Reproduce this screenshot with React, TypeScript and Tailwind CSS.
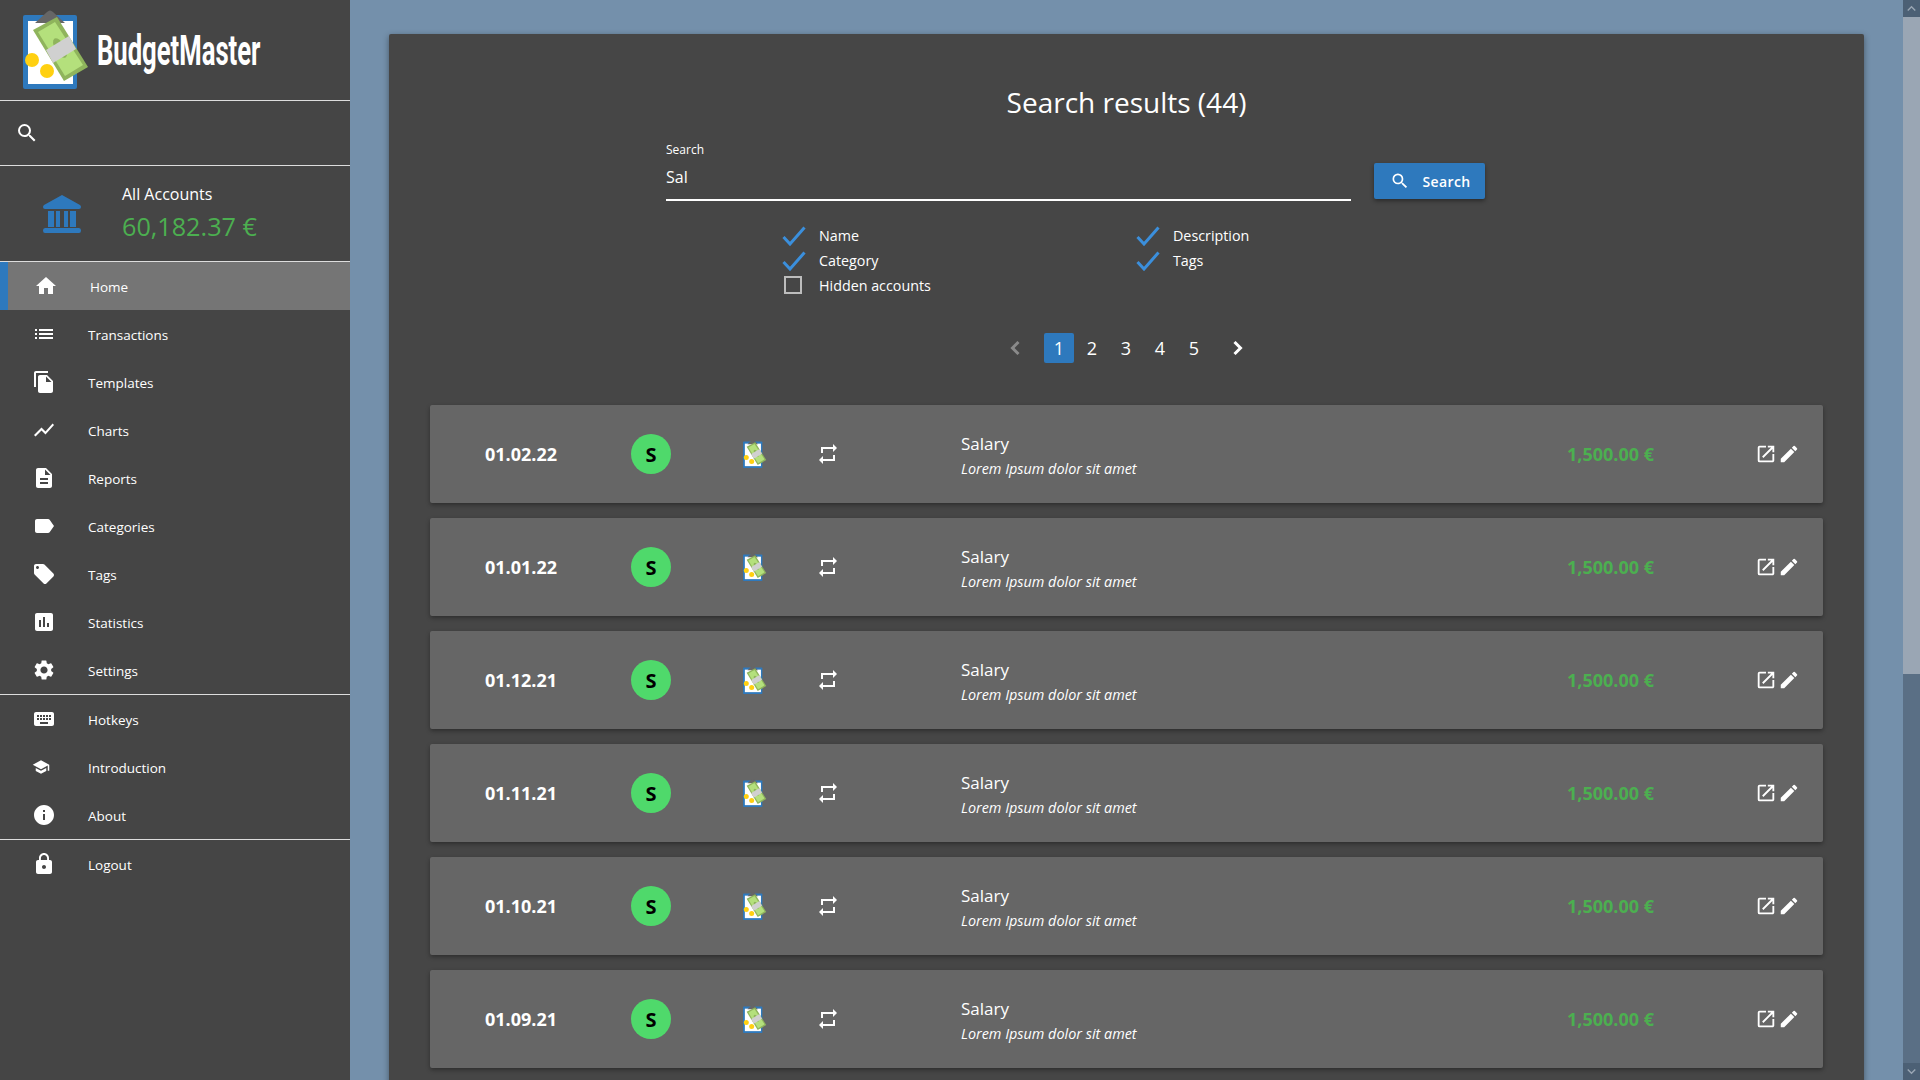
import {
  MdAssessment,
  MdDescription,
  MdEdit,
  MdFileCopy,
  MdHome,
  MdInfo,
  MdKeyboard,
  MdKeyboardArrowDown,
  MdKeyboardArrowUp,
  MdLabel,
  MdList,
  MdLocalOffer,
  MdLock,
  MdOpenInNew,
  MdRepeat,
  MdSchool,
  MdSearch,
  MdSettings,
  MdShowChart,
} from "react-icons/md";

const menuTop = [
  { label: "Transactions", icon: MdList },
  { label: "Templates", icon: MdFileCopy },
  { label: "Charts", icon: MdShowChart },
  { label: "Reports", icon: MdDescription },
  { label: "Categories", icon: MdLabel },
  { label: "Tags", icon: MdLocalOffer },
  { label: "Statistics", icon: MdAssessment },
  { label: "Settings", icon: MdSettings },
];

const dates = ["01.02.22", "01.01.22", "01.12.21", "01.11.21", "01.10.21", "01.09.21"];

function Logo({ width, height }: { width: number; height: number }) {
  return (
    <svg width={width} height={height} viewBox="20 8 70 84" className="shrink-0">
      <rect x="23" y="15" width="54" height="74" rx="2" fill="#2e79bd" />
      <rect x="28" y="21" width="45" height="63" fill="#ffffff" />
      <path d="M35 23 L47 12 Q50 9 53 12 L65 23 Z" fill="#666666" />
      <circle cx="32" cy="60" r="7" fill="#ffd011" />
      <circle cx="47" cy="71" r="7" fill="#ffd011" />
      <path d="M33 30 L57 17 L88 67 L64 81 Z" fill="#8fb45c" />
      <path d="M38 32 L55 22 L83 65 L65 76 Z" fill="#b4e07c" />
      <ellipse cx="60" cy="48" rx="5" ry="11" transform="rotate(-30 60 48)" fill="#8fb45c" />
      <path d="M46 50 L69 36 L76 49 L53 63 Z" fill="#d0d0d0" />
    </svg>
  );
}

function BankIcon() {
  return (
    <svg width="38" height="38" viewBox="0 0 38 38" className="shrink-0" fill="#2e79bd">
      <path d="M19 0 L37 10 Q38 11 38 12 Q38 14 36 14 L2 14 Q0 14 0 12 Q0 11 1 10 Z" />
      <path d="M5 16 H11 V32 H5 Z M13 16 H17 V32 H13 Z M21 16 H25 V32 H21 Z M27 16 H33 V32 H27 Z" />
      <path d="M2 33 H36 Q38 33 38 35.5 Q38 38 36 38 H2 Q0 38 0 35.5 Q0 33 2 33 Z" />
    </svg>
  );
}

function Chevron({ d, color }: { d: string; color: string }) {
  return (
    <svg width="10" height="14" viewBox="0 0 10 14" className="shrink-0">
      <path d={d} fill="none" stroke={color} strokeWidth="3" />
    </svg>
  );
}

function MenuItem({ label, icon: Icon, small }: { label: string; icon: typeof MdHome; small?: boolean }) {
  return (
    <div className="flex h-[48px] items-center pl-[32px] text-[13.5px] font-medium text-white">
      <div className="flex h-[24px] w-[24px] shrink-0 items-center justify-center">
        {small ? <Icon size={20} className="mr-[6px]" /> : <Icon size={24} />}
      </div>
      <span className="mt-[2px] ml-[32px]">{label}</span>
    </div>
  );
}

function Check({ label }: { label: string }) {
  return (
    <div className="flex h-[25px] items-center text-[14.3px] text-white">
      <svg width="24" height="20" viewBox="0 0 24 20" className="shrink-0">
        <path d="M1.5 11 L8 18 L22.5 1.5" fill="none" stroke="#3b8fdc" strokeWidth="3" />
      </svg>
      <span className="ml-[13px]">{label}</span>
    </div>
  );
}

function Row({ date }: { date: string }) {
  return (
    <div className="grid h-[98px] grid-cols-[201px_111px_74px_145px_693px_1fr] items-center rounded-[2px] bg-[#666666] text-white shadow-[0_2px_4px_rgba(0,0,0,0.35)]">
      <div className="pl-[55px] text-[18px] font-bold">{date}</div>
      <div className="flex h-[40px] w-[40px] items-center justify-center rounded-full bg-[#4fd96b] pt-[1px] text-[20px] font-bold text-black">
        S
      </div>
      <Logo width={25} height={30} />
      <MdRepeat size={24} />
      <div className="flex items-center justify-between">
        <div className="pt-[2px]">
          <div className="text-[17px] leading-[24px]">Salary</div>
          <div className="mt-[3px] text-[14.4px] italic leading-[20px]">Lorem Ipsum dolor sit amet</div>
        </div>
        <div className="text-[18px] font-bold text-[#4caf50]">1,500.00 €</div>
      </div>
      <div className="flex items-center pl-[101px]">
        <MdOpenInNew size={22} />
        <MdEdit size={22} className="ml-[1px]" />
      </div>
    </div>
  );
}

export default function App() {
  return (
    <div className="flex h-screen overflow-hidden bg-[#7490ab] font-['Open_Sans',sans-serif]">
      <aside className="h-full w-[350px] shrink-0 bg-[#454545]">
        <div className="flex h-[101px] items-center border-b border-[#dddddd] pl-[20px]">
          <Logo width={70} height={84} />
          <span className="ml-[7px] origin-left scale-x-[0.61] font-['Roboto',sans-serif] text-[42px] font-bold whitespace-nowrap text-white">
            BudgetMaster
          </span>
        </div>
        <div className="flex h-[65px] items-center border-b border-[#dddddd] pl-[15px] text-white">
          <MdSearch size={24} />
        </div>
        <div className="flex h-[96px] items-center border-b border-[#dddddd] pl-[43px]">
          <BankIcon />
          <div className="ml-[41px] text-white">
            <div className="text-[16px] leading-[22px]">All Accounts</div>
            <div className="mt-[3px] text-[25.2px] leading-[36px] text-[#4caf50]">60,182.37 €</div>
          </div>
        </div>
        <div className="flex h-[48px] items-center border-l-[8px] border-[#2e79bd] bg-[#757575] pl-[26px] text-[13.5px] font-medium text-white">
          <MdHome size={24} className="shrink-0" />
          <span className="mt-[2px] ml-[32px]">Home</span>
        </div>
        {menuTop.map((item) => (
          <MenuItem key={item.label} {...item} />
        ))}
        <div className="border-t border-[#dddddd]">
          <MenuItem label="Hotkeys" icon={MdKeyboard} />
          <MenuItem label="Introduction" icon={MdSchool} small />
          <MenuItem label="About" icon={MdInfo} />
        </div>
        <div className="border-t border-[#dddddd]">
          <MenuItem label="Logout" icon={MdLock} />
        </div>
      </aside>

      <main className="h-full min-w-0 flex-1 pt-[34px] pr-[39px] pl-[39px]">
        <div className="rounded-[2px] bg-[#464646] pr-[41px] pb-[40px] pl-[41px] text-white shadow-[0_2px_6px_rgba(0,0,0,0.4)]">
          <h1 className="pt-[48px] text-center text-[28px] leading-[40px] font-normal">Search results (44)</h1>

          <div className="mt-[20px] ml-[236px] flex items-start">
            <div className="w-[685px]">
              <div className="text-[12px] leading-[16px]">Search</div>
              <div className="mt-[7px] text-[16px] leading-[24px]">Sal</div>
              <div className="mt-[10px] border-b-2 border-white" />
            </div>
            <button
              type="button"
              className="mt-[21px] ml-[23px] flex h-[36px] w-[111px] items-center justify-center rounded-[2px] bg-[#2e79bd] pl-[2px] text-[14px] font-semibold tracking-[0.4px] text-white shadow-[0_2px_4px_rgba(0,0,0,0.4)]"
            >
              <MdSearch size={20} />
              <span className="ml-[12px]">Search</span>
            </button>
          </div>

          <div className="mt-[22px] ml-[352px] grid w-[720px] grid-cols-[354px_1fr]">
            <Check label="Name" />
            <Check label="Description" />
            <Check label="Category" />
            <Check label="Tags" />
            <div className="flex h-[25px] items-center text-[14.3px]">
              <div className="mb-[2px] ml-[2px] h-[18px] w-[18px] border-2 border-[#bdbdbd]" />
              <span className="ml-[17px]">Hidden accounts</span>
            </div>
          </div>

          <div className="mt-[35px] ml-[580px] flex h-[30px] items-center text-[18px]">
            <Chevron d="M8.5 1 L2.5 7 L8.5 13" color="#8a8a8a" />
            <span className="ml-[24px] flex h-[30px] w-[30px] items-center justify-center rounded-[2px] bg-[#2e79bd]">1</span>
            <span className="ml-[1px] w-[34px] text-center">2</span>
            <span className="w-[34px] text-center">3</span>
            <span className="w-[34px] text-center">4</span>
            <span className="w-[34px] text-center">5</span>
            <div className="ml-[22px]">
              <Chevron d="M1.5 1 L7.5 7 L1.5 13" color="#ffffff" />
            </div>
          </div>

          <div className="mt-[42px] flex flex-col gap-[15px]">
            {dates.map((d) => (
              <Row key={d} date={d} />
            ))}
          </div>
        </div>
      </main>

      <div className="flex h-full w-[17px] shrink-0 flex-col bg-[#5a6f85] text-[#9aa6b4]">
        <div className="flex h-[17px] items-center justify-center bg-[#4c6075]">
          <MdKeyboardArrowUp size={17} />
        </div>
        <div className="h-[657px] bg-[#9aa6b4]" />
        <div className="flex-1" />
        <div className="flex h-[17px] items-center justify-center bg-[#4c6075]">
          <MdKeyboardArrowDown size={17} />
        </div>
      </div>
    </div>
  );
}
